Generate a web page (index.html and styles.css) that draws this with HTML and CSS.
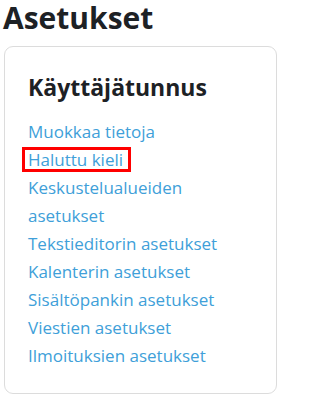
FILE: index.html
```html
<!DOCTYPE html>
<html lang="fi">
<head>
<meta charset="utf-8">
<title>Asetukset</title>
<link rel="stylesheet" href="styles.css">
</head>
<body>
<div class="page">
  <h1 class="title">Asetukset</h1>
  <section class="card">
    <h2 class="card-title">Käyttäjätunnus</h2>
    <ul class="links">
      <li><a href="#">Muokkaa tietoja</a></li>
      <li><a href="#" class="marked">Haluttu kieli</a></li>
      <li><a href="#">Keskustelualueiden asetukset</a></li>
      <li><a href="#">Tekstieditorin asetukset</a></li>
      <li><a href="#">Kalenterin asetukset</a></li>
      <li><a href="#">Sisältöpankin asetukset</a></li>
      <li><a href="#">Viestien asetukset</a></li>
      <li><a href="#">Ilmoituksien asetukset</a></li>
    </ul>
  </section>
</div>
</body>
</html>
```
FILE: styles.css
```css
html, body {
  margin: 0;
  padding: 0;
  background: #fff;
}
body {
  font-family: "Open Sans", "Noto Sans", sans-serif;
  color: #1d2125;
}
.page {
  box-sizing: border-box;
  width: 283px;
  padding: 0 6px 0 4px;
}
.title {
  margin: 0 0 11px -1px;
  font-size: 30px;
  line-height: 35px;
  font-weight: 700;
}
.card {
  border: 1px solid #dcdcdc;
  border-radius: 9px;
  padding: 25px 20px 23px 23px;
}
.card-title {
  margin: 0 0 16px 0;
  font-size: 23px;
  line-height: 30px;
  font-weight: 700;
}
.links {
  list-style: none;
  margin: 0;
  padding: 0;
  font-size: 17px;
  line-height: 28px;
}
.links a {
  color: #409fd9;
  text-decoration: none;
}
.links a.marked {
  display: inline-block;
  border: 3px solid #f00;
  padding: 0 5px 0 3px;
  margin-left: -6px;
  line-height: 19px;
}
```
